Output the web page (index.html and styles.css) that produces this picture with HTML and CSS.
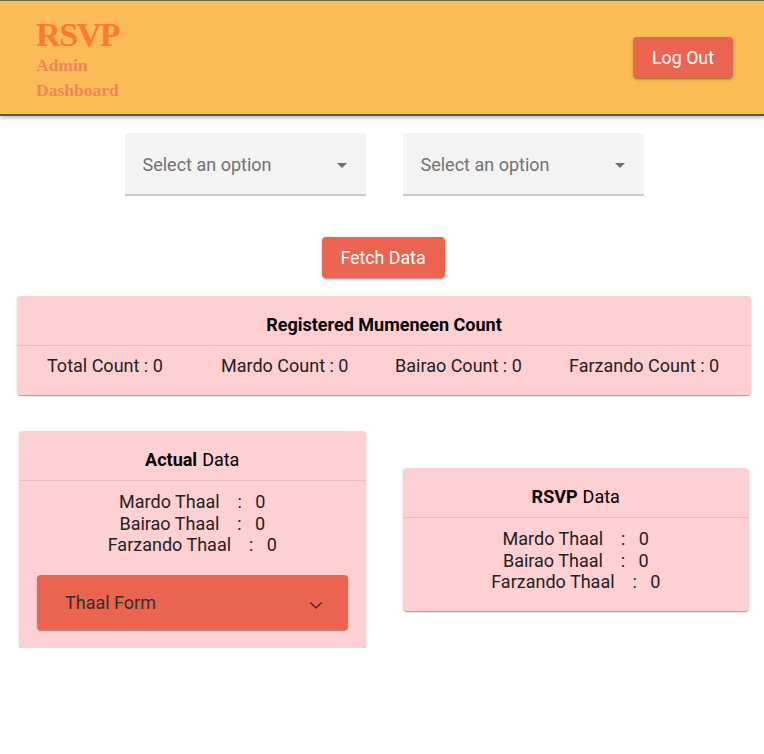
FILE: index.html
```html
<!DOCTYPE html>
<html>
<head>
<meta charset="utf-8">
<link rel="stylesheet" href="styles.css">
</head>
<body>
<header class="appbar">
  <div class="brand">
    <div class="brand-title">RSVP</div>
    <div class="brand-sub">Admin</div>
    <div class="brand-sub">Dashboard</div>
  </div>
  <button class="btn btn-logout">Log Out</button>
</header>

<main class="content">
  <div class="selects">
    <div class="select">
      <span class="select-placeholder">Select an option</span>
      <svg class="select-arrow" width="24" height="24" viewBox="0 0 24 24"><path d="M7 10l5 5 5-5z" fill="#6f6f6f"/></svg>
    </div>
    <div class="select">
      <span class="select-placeholder">Select an option</span>
      <svg class="select-arrow" width="24" height="24" viewBox="0 0 24 24"><path d="M7 10l5 5 5-5z" fill="#6f6f6f"/></svg>
    </div>
  </div>

  <div class="fetch-row">
    <button class="btn btn-fetch">Fetch Data</button>
  </div>

  <section class="card card-wide">
    <div class="card-head"><b>Registered Mumeneen Count</b></div>
    <div class="counts">
      <span>Total Count : 0</span>
      <span>Mardo Count : 0</span>
      <span>Bairao Count : 0</span>
      <span>Farzando Count : 0</span>
    </div>
  </section>

  <div class="cards-row">
    <section class="card card-half">
      <div class="card-head"><b>Actual</b> Data</div>
      <div class="card-body">
        <div class="stat">Mardo Thaal    :   0</div>
        <div class="stat">Bairao Thaal    :   0</div>
        <div class="stat">Farzando Thaal    :   0</div>
        <div class="accordion">
          <span>Thaal Form</span>
          <svg class="chevron" width="14" height="10" viewBox="0 0 14 10"><polyline points="1.5,2.5 7,8 12.5,2.5" fill="none" stroke="#3a2c2a" stroke-width="1.4"/></svg>
        </div>
      </div>
    </section>
    <section class="card card-half">
      <div class="card-head"><b>RSVP</b> Data</div>
      <div class="card-body">
        <div class="stat">Mardo Thaal    :   0</div>
        <div class="stat">Bairao Thaal    :   0</div>
        <div class="stat">Farzando Thaal    :   0</div>
      </div>
    </section>
  </div>
</main>
</body>
</html>
```

FILE: styles.css
```css
* { box-sizing: border-box; }

body {
  margin: 0;
  background: #ffffff;
  font-family: Roboto, "Liberation Sans", sans-serif;
  font-size: 18px;
  color: #1f1f1f;
}

.appbar {
  height: 116px;
  background: #fdbb57;
  border-top: 1px solid #6d6852;
  border-bottom: 2px solid #5d594c;
  box-shadow: 0 2px 4px rgba(0,0,0,0.25);
  display: flex;
  align-items: center;
  justify-content: space-between;
  padding: 0 31px 0 36px;
}

.brand {
  font-family: "Liberation Serif", "DejaVu Serif", serif;
  font-weight: bold;
  align-self: flex-start;
  padding-top: 16px;
}

.brand-title {
  font-size: 34px;
  line-height: 36px;
  letter-spacing: -1.4px;
  color: #ff7a30;
}

.brand-sub {
  font-size: 17.5px;
  line-height: 25px;
  color: #f0855c;
}

.btn {
  font-family: Roboto, "Liberation Sans", sans-serif;
  font-size: 17.8px;
  color: #ffffff;
  background: #eb6452;
  border: none;
  border-radius: 4px;
  height: 41px;
  padding: 0 16px;
  box-shadow: 0 3px 1px -2px rgba(0,0,0,0.2), 0 2px 2px 0 rgba(0,0,0,0.14), 0 1px 5px 0 rgba(0,0,0,0.12);
}

.btn-logout { width: 100px; }
.btn-fetch { width: 123px; margin-left: 2px; }

.content {
  padding-top: 17px;
}

.selects {
  display: flex;
  justify-content: center;
  gap: 37px;
  padding-left: 4px;
}

.select {
  width: 241px;
  height: 63px;
  background: #f3f3f3;
  border-radius: 4px 4px 0 0;
  border-bottom: 2px solid #cbcbcb;
  display: flex;
  align-items: center;
  justify-content: space-between;
  padding: 2px 12px 0 18px;
}

.select-placeholder { color: #727272; }

.fetch-row {
  display: flex;
  justify-content: center;
  margin-top: 41px;
}

.card {
  background: #ffd0d1;
  border-radius: 4px;
  box-shadow: 0 2px 1px -1px rgba(0,0,0,0.2), 0 1px 1px 0 rgba(0,0,0,0.14), 0 1px 3px 0 rgba(0,0,0,0.12);
}

.card-head {
  height: 50px;
  display: flex;
  align-items: flex-start;
  justify-content: center;
  gap: 5px;
  padding-top: 18px;
  line-height: 21px;
  border-bottom: 1px solid #ecbdbe;
  color: #000;
}

.card-wide {
  margin: 18px 13px 0 17px;
}

.counts {
  display: grid;
  grid-template-columns: repeat(4, 1fr);
  padding: 9px 8px 19px 30px;
  line-height: 21px;
  color: #222;
}

.cards-row {
  display: flex;
  align-items: center;
  gap: 37px;
  margin: 36px 15px 0 19px;
}

.card-half { flex: 1; }

.card-body {
  padding: 10px 18px 18px;
  text-align: center;
  color: #222;
}

.stat {
  line-height: 21.5px;
  white-space: pre;
}

.accordion {
  margin-top: 19px;
  height: 55px;
  background: #eb6451;
  border-radius: 4px;
  box-shadow: 0 2px 1px -1px rgba(0,0,0,0.2), 0 1px 1px 0 rgba(0,0,0,0.14), 0 1px 3px 0 rgba(0,0,0,0.12);
  display: flex;
  align-items: center;
  justify-content: space-between;
  padding: 0 25px 0 28px;
  color: #3a2c2a;
  text-align: left;
  white-space: normal;
}

.chevron { margin-top: 6px; }
```
